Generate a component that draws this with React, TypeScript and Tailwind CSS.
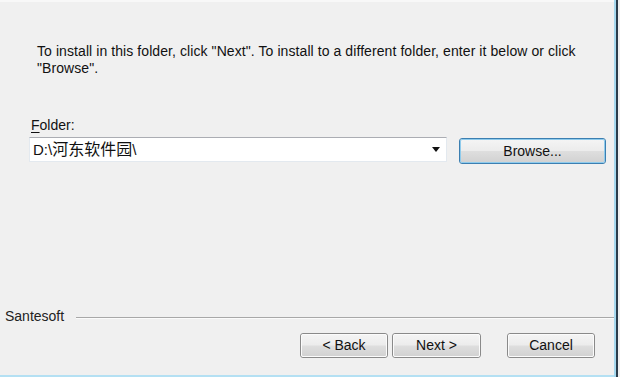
const font = { fontFamily: '"Liberation Sans", "Noto Sans CJK SC", sans-serif' };

function WinButton({ label, focused = false, className = '' }: { label: string; focused?: boolean; className?: string }) {
  return (
    <div
      className={`relative flex items-center justify-center rounded-[3px] border ${
        focused ? 'border-[#3c7fb1]' : 'border-[#8a8a8a]'
      } ${className}`}
    >
      <div
        className={`absolute inset-0 rounded-[2px] border ${
          focused ? 'border-[#8fcbec]' : 'border-[#fbfbfb]'
        } bg-[linear-gradient(to_bottom,#f4f4f4_0%,#ececec_48%,#dedede_52%,#d2d2d2_100%)]`}
      ></div>
      <span className="relative text-[14px] leading-[17px] text-[#111]">{label}</span>
    </div>
  );
}

export default function App() {
  return (
    <div className="flex w-[620px] h-[377px] bg-[#f0f0f0] overflow-hidden" style={font}>
      {/* dialog body */}
      <div className="flex flex-col w-[614px] h-full">
        <div className="h-[2px] bg-[#f8f8f8]"></div>

        <p className="mt-[41px] pl-[37px] text-[14px] leading-[17px] tracking-[0.08px] text-[#111] whitespace-nowrap">
          To install in this folder, click "Next". To install to a different folder, enter it below or click
          <br />
          "Browse".
        </p>

        <div className="mt-[40px] pl-[31px] text-[14px] leading-[17px] text-[#111]">
          <span className="underline underline-offset-2">F</span>older:
        </div>

        <div className="mt-[3px] flex items-start pl-[29px]">
          <div className="flex items-center w-[418px] h-[25px] bg-white border border-[#e3e9ef] border-t-[#abadb3]">
            <span className="flex-1 pl-[3px] text-[15px] leading-[17px] text-[#111]">
              D:\<span className="text-[16px]">河东软件园</span>\
            </span>
            <svg width="8" height="5" viewBox="0 0 8 5" className="mr-[6px]">
              <path d="M0 0 H8 L4 5 Z" fill="#111" />
            </svg>
          </div>
          <WinButton label="Browse..." focused className="ml-[12px] mt-[1px] w-[147px] h-[26px]" />
        </div>

        <div className="mt-[144px] flex items-center pl-[5px] h-[17px]">
          <span className="text-[14px] leading-[17px] text-[#222]">Santesoft</span>
          <div className="flex-1 ml-[12px] mt-[3px] border-t border-[#a8a8a8] border-b border-b-[#fbfbfb]"></div>
        </div>

        <div className="mt-[8px] flex pl-[300px]">
          <WinButton label="< Back" className="w-[88px] h-[25px]" />
          <WinButton label="Next >" className="ml-[4px] w-[89px] h-[25px]" />
          <WinButton label="Cancel" className="ml-[26px] w-[88px] h-[25px]" />
        </div>

        <div className="flex-1"></div>
        <div className="h-[2px] bg-[#b4e0f3]"></div>
      </div>

      {/* window frame edge */}
      <div className="w-[2px] h-full bg-[#a6d8ee]"></div>
      <div className="w-[2px] h-full bg-[#2b3c4b]"></div>
      <div className="w-[2px] h-full bg-[#f0f0f0]"></div>
    </div>
  );
}
